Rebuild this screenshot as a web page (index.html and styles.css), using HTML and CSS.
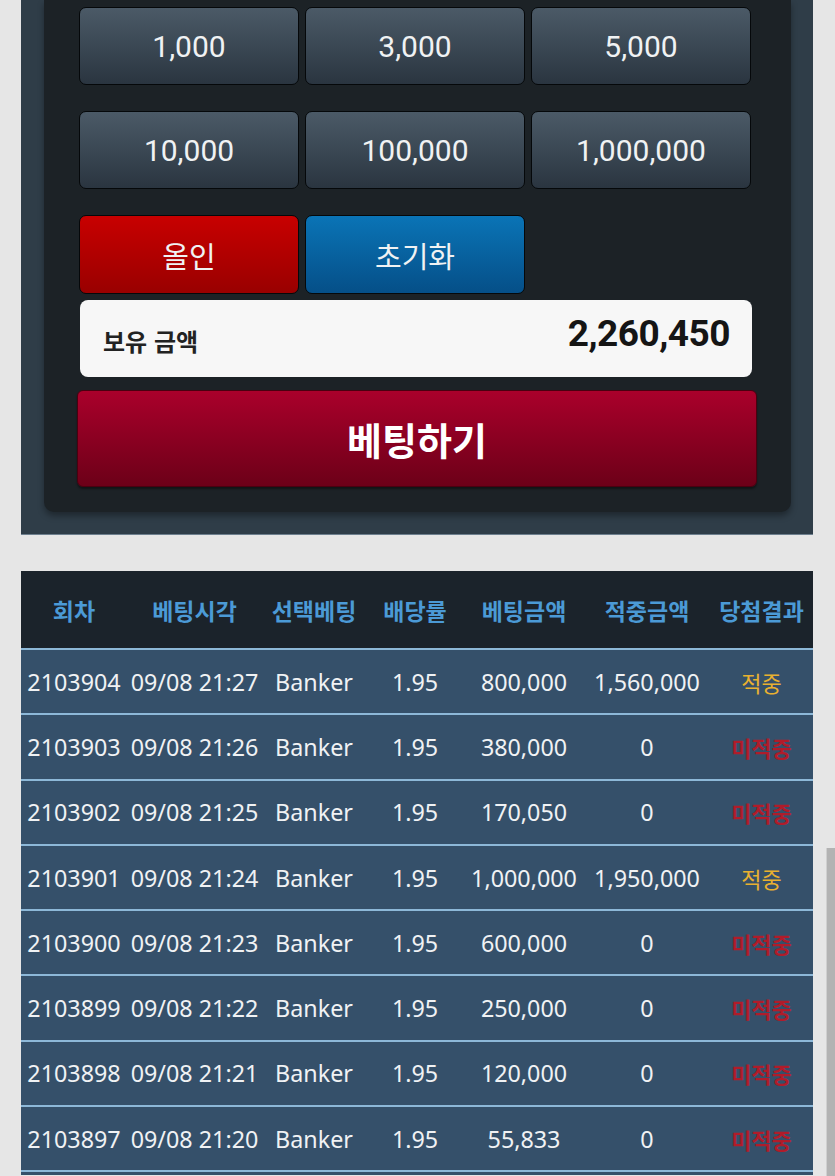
FILE: index.html
```html
<!DOCTYPE html>
<html lang="ko">
<head>
<meta charset="utf-8">
<link rel="stylesheet" href="styles.css">
</head>
<body>
<div class="panel">
  <div class="board">
    <div class="chips">
      <button class="chip">1,000</button>
      <button class="chip">3,000</button>
      <button class="chip">5,000</button>
      <button class="chip">10,000</button>
      <button class="chip">100,000</button>
      <button class="chip">1,000,000</button>
      <button class="chip red">올인</button>
      <button class="chip blue">초기화</button>
    </div>
    <div class="balance">
      <span class="balance-label">보유 금액</span>
      <span class="balance-value">2,260,450</span>
    </div>
    <button class="bet">베팅하기</button>
  </div>
</div>

<table class="history">
  <colgroup>
    <col class="c1"><col class="c2"><col class="c3"><col class="c4"><col class="c5"><col class="c6"><col class="c7">
  </colgroup>
  <thead>
    <tr><th>회차</th><th>베팅시각</th><th>선택베팅</th><th>배당률</th><th>베팅금액</th><th>적중금액</th><th>당첨결과</th></tr>
  </thead>
  <tbody>
    <tr><td>2103904</td><td>09/08 21:27</td><td>Banker</td><td>1.95</td><td>800,000</td><td>1,560,000</td><td class="win">적중</td></tr>
    <tr><td>2103903</td><td>09/08 21:26</td><td>Banker</td><td>1.95</td><td>380,000</td><td>0</td><td class="lose">미적중</td></tr>
    <tr><td>2103902</td><td>09/08 21:25</td><td>Banker</td><td>1.95</td><td>170,050</td><td>0</td><td class="lose">미적중</td></tr>
    <tr><td>2103901</td><td>09/08 21:24</td><td>Banker</td><td>1.95</td><td>1,000,000</td><td>1,950,000</td><td class="win">적중</td></tr>
    <tr><td>2103900</td><td>09/08 21:23</td><td>Banker</td><td>1.95</td><td>600,000</td><td>0</td><td class="lose">미적중</td></tr>
    <tr><td>2103899</td><td>09/08 21:22</td><td>Banker</td><td>1.95</td><td>250,000</td><td>0</td><td class="lose">미적중</td></tr>
    <tr><td>2103898</td><td>09/08 21:21</td><td>Banker</td><td>1.95</td><td>120,000</td><td>0</td><td class="lose">미적중</td></tr>
    <tr><td>2103897</td><td>09/08 21:20</td><td>Banker</td><td>1.95</td><td>55,833</td><td>0</td><td class="lose">미적중</td></tr>
    <tr class="blank"><td></td><td></td><td></td><td></td><td></td><td></td><td></td></tr>
  </tbody>
</table>

<div class="scrollbar"></div>
</body>
</html>
```

FILE: styles.css
```css
html, body {
  margin: 0;
  padding: 0;
  background: #e6e6e6;
  overflow: hidden;
}

body {
  font-family: "Noto Sans", "Noto Sans CJK KR", sans-serif;
}

.panel {
  width: 747px;
  margin: 0 0 0 21px;
  padding: 0 22px 22px 23px;
  background: #2f3d48;
  border-bottom: 1px solid #6d7f8e;
}

.board {
  background: #1c2226;
  border-radius: 0 0 10px 10px;
  padding: 7px 40px 25px 35px;
  box-shadow: 0 4px 6px rgba(0, 0, 0, 0.35);
}

.chips {
  display: grid;
  grid-template-columns: repeat(3, 220px);
  grid-auto-rows: 78px;
  column-gap: 6px;
  row-gap: 26px;
}

.chip {
  margin: 0;
  padding: 0;
  border: 1px solid #05080a;
  border-radius: 7px;
  background: linear-gradient(#4b5a67, #2a3540);
  color: #f0f2f3;
  font-family: Roboto, "Noto Sans CJK KR", sans-serif;
  font-size: 30px;
  cursor: pointer;
}

.chip.red {
  background: linear-gradient(#c80000, #990000);
  font-family: "Noto Sans CJK KR", sans-serif;
  font-size: 29px;
  height: 79px;
}

.chip.blue {
  background: linear-gradient(#0a74b6, #054f88);
  font-family: "Noto Sans CJK KR", sans-serif;
  font-size: 29px;
  height: 79px;
}

.balance {
  margin-top: 7px;
  height: 77px;
  background: #f7f7f7;
  border-radius: 8px;
  display: flex;
  align-items: center;
  justify-content: space-between;
  padding: 0 22px 0 23px;
  box-sizing: border-box;
  width: 672px;
  margin-left: 1px;
}

.balance-label {
  font-family: "Noto Sans CJK KR", sans-serif;
  font-weight: 700;
  font-size: 24px;
  color: #222;
  padding-top: 4px;
}

.balance-value {
  font-family: Roboto, sans-serif;
  font-weight: 700;
  font-size: 37px;
  color: #151515;
  letter-spacing: -0.5px;
  padding-bottom: 10px;
}

.bet {
  display: block;
  margin: 13px 0 0 -2px;
  width: 680px;
  height: 97px;
  border: 1px solid #4a0010;
  border-radius: 6px;
  background: linear-gradient(#aa002b, #6c0018);
  color: #fff;
  font-family: "Noto Sans CJK KR", sans-serif;
  font-weight: 700;
  font-size: 38px;
  box-shadow: 0 2px 2px rgba(0, 0, 0, 0.4);
}

.history {
  margin: 36px 0 0 21px;
  width: 792px;
  border-collapse: collapse;
  table-layout: fixed;
}

.c1 { width: 106px; }
.c2 { width: 135px; }
.c3 { width: 104px; }
.c4 { width: 98px; }
.c5 { width: 120px; }
.c6 { width: 126px; }
.c7 { width: 103px; }

.history th {
  height: 77px;
  background: #1b232b;
  color: #4b9ad6;
  font-family: "Noto Sans CJK KR", sans-serif;
  font-weight: 700;
  font-size: 23px;
  padding: 0;
  text-align: center;
  white-space: nowrap;
}

.history tbody tr {
  height: 65.3px;
}

.history tbody tr.blank {
  height: 4px;
}

.history td {
  background: #35506a;
  color: #f0f2f4;
  font-size: 23.3px;
  padding: 0;
  text-align: center;
  white-space: nowrap;
  border-top: 2px solid #8db8d8;
}

.history td.win {
  color: #e8b030;
  font-family: "Noto Sans CJK KR", sans-serif;
  font-size: 22px;
}

.history td.lose {
  color: #b01c2a;
  font-family: "Noto Sans CJK KR", sans-serif;
  font-weight: 700;
  font-size: 22px;
}

.scrollbar {
  position: fixed;
  right: 0;
  top: 848px;
  width: 8px;
  height: 328px;
  background: #b3b3b3;
  border-left: 1px solid #d0d0d0;
}
```
